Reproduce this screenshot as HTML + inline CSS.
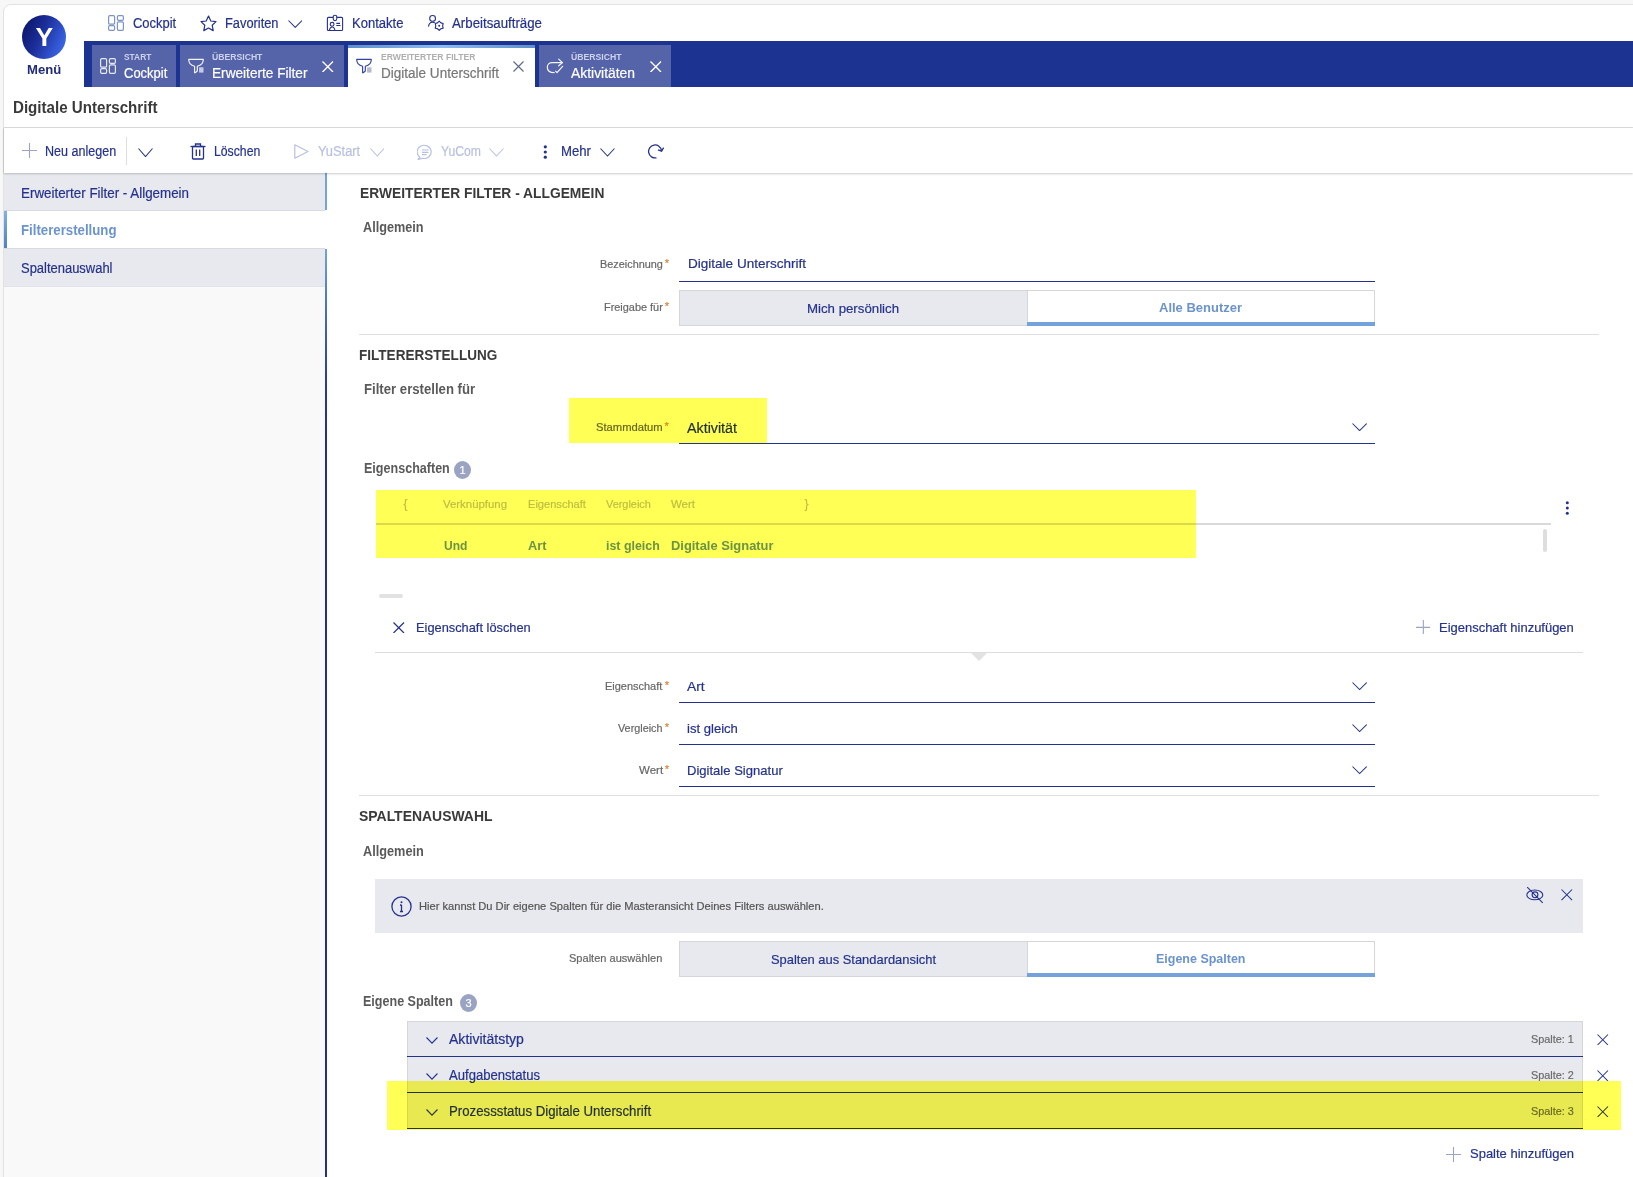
<!DOCTYPE html><html><head><meta charset="utf-8"><style>
*{margin:0;padding:0;box-sizing:content-box;}
html,body{width:1633px;height:1177px;overflow:hidden;background:#f7f7f7;font-family:"Liberation Sans",sans-serif;}
.t{position:absolute;white-space:nowrap;line-height:1;-webkit-text-stroke:0.2px currentColor;}
.t.bo{-webkit-text-stroke:0;}
.b{position:absolute;display:block;}
#card{position:absolute;left:3px;top:4px;width:1640px;height:1200px;background:#fff;border:1px solid #e2e2e2;border-radius:8px;}
#wrap{position:absolute;left:0;top:0;width:1633px;height:1177px;isolation:isolate;}
</style></head><body><div id="wrap"><div id="card"></div>
<div class="b" style="left:22px;top:15px;width:44px;height:44px;border-radius:50%;background:linear-gradient(115deg,#08105e 0%,#1b2d98 42%,#2f52cc 72%,#4474f6 100%);"></div>
<div class="t bo" style="left:35.50px;top:24.47px;font-size:26.5px;color:#fff;font-weight:bold;">Y</div>
<div class="t bo" style="left:27.30px;top:63.39px;font-size:13.6px;color:#1f2b7c;font-weight:bold;transform:scaleX(0.9631);transform-origin:0 0;">Menü</div>
<svg class="b" style="left:108px;top:15px;" width="16" height="16" viewBox="0 0 16 16" fill="none"><g stroke="#7b93c6" stroke-width="1.2"><rect x="0.6" y="0.6" width="6" height="8.6" rx="1.3"/><rect x="0.6" y="10.6" width="6" height="4.8" rx="1.3"/><rect x="9.4" y="0.6" width="6" height="4.8" rx="1.3"/><rect x="9.4" y="6.8" width="6" height="8.6" rx="1.3"/></g></svg>
<div class="t" style="left:132.70px;top:16.05px;font-size:14px;color:#24328c;transform:scaleX(0.9255);transform-origin:0 0;">Cockpit</div>
<svg class="b" style="left:200px;top:14.5px;" width="17" height="17" viewBox="0 0 17 17" fill="none"><path d="M8.5 1L10.8 6L16 6.6L12.2 10.2L13.2 15.6L8.5 13L3.8 15.6L4.8 10.2L1 6.6L6.2 6Z" stroke="#24328c" stroke-width="1.2" stroke-linejoin="round"/></svg>
<div class="t" style="left:224.80px;top:16.05px;font-size:14px;color:#24328c;transform:scaleX(0.9168);transform-origin:0 0;">Favoriten</div>
<svg class="b" style="left:287.7px;top:19.8px;" width="14.5" height="8.4" viewBox="0 0 14.5 8.4" fill="none"><polyline points="0.5,0.5 7.25,7.4 14.0,0.5" stroke="#24328c" stroke-width="1.05"/></svg>
<svg class="b" style="left:322px;top:12px;" width="24" height="22" viewBox="0 0 24 22" fill="none"><g stroke="#24328c" stroke-width="1.1"><rect x="5.4" y="5.4" width="15.2" height="13.1" rx="1"/><rect x="11.2" y="3.2" width="3.6" height="5.4" rx="1.8" fill="#fff"/><circle cx="10.1" cy="12.3" r="1.9"/><path d="M7.4 18.5C7.7 16.2 8.8 15 10.1 15S12.6 16.2 12.9 18.5"/><path d="M14.3 11.4H18M14.3 13.5H18.5"/></g></svg>
<div class="t" style="left:351.80px;top:16.05px;font-size:14px;color:#24328c;transform:scaleX(0.9302);transform-origin:0 0;">Kontakte</div>
<svg class="b" style="left:424px;top:12px;" width="24" height="22" viewBox="0 0 24 22" fill="none"><g stroke="#24328c" stroke-width="1.1" stroke-linejoin="round"><circle cx="8.6" cy="6.4" r="2.9"/><path d="M4.5 14.6C4.8 11.8 6.5 10.3 8.6 10.3C9.5 10.3 10.3 10.5 10.9 10.9"/><path d="M15.20,9.20 L16.90,10.86 L19.18,11.50 L18.60,13.80 L19.18,16.10 L16.90,16.74 L15.20,18.40 L13.50,16.74 L11.22,16.10 L11.80,13.80 L11.22,11.50 L13.50,10.86Z"/></g><circle cx="15.2" cy="13.8" r="1" fill="#24328c"/></svg>
<div class="t" style="left:452.00px;top:16.05px;font-size:14px;color:#24328c;transform:scaleX(0.9479);transform-origin:0 0;">Arbeitsaufträge</div>
<div class="b" style="left:84px;top:41px;width:1549px;height:46px;background:#1c3391;"></div>
<div class="b" style="left:92px;top:45px;width:84px;height:42px;background:#5563a8;"></div>
<svg class="b" style="left:100px;top:58px;" width="16" height="16" viewBox="0 0 16 16" fill="none"><g stroke="#e6e9f4" stroke-width="1.2"><rect x="0.6" y="0.6" width="6" height="8.6" rx="1.3"/><rect x="0.6" y="10.6" width="6" height="4.8" rx="1.3"/><rect x="9.4" y="0.6" width="6" height="4.8" rx="1.3"/><rect x="9.4" y="6.8" width="6" height="8.6" rx="1.3"/></g></svg>
<div class="t bo" style="left:124.30px;top:53.18px;font-size:9px;color:#cdd2ec;font-weight:bold;transform:scaleX(0.9308);transform-origin:0 0;">START</div>
<div class="t" style="left:124.30px;top:66.35px;font-size:14px;color:#fff;transform:scaleX(0.9277);transform-origin:0 0;">Cockpit</div>
<div class="b" style="left:180px;top:45px;width:164px;height:42px;background:#5563a8;"></div>
<svg class="b" style="left:184px;top:54px;" width="24" height="24" viewBox="0 0 24 24" fill="none"><path d="M4.7 5.3H19.3C19.3 9.5 16.5 11.6 13.3 12.2V17L11.2 18.7H10.6V12.2C7.5 11.6 4.7 9.5 4.7 5.3Z" stroke="#f4f5fb" stroke-width="1.15" stroke-linejoin="round"/><rect x="15.1" y="13.3" width="4.4" height="5.3" fill="#c5c9e6"/></svg>
<div class="t bo" style="left:212.30px;top:53.18px;font-size:9px;color:#cdd2ec;font-weight:bold;transform:scaleX(0.9599);transform-origin:0 0;">ÜBERSICHT</div>
<div class="t" style="left:212.30px;top:66.35px;font-size:14px;color:#fff;transform:scaleX(0.9742);transform-origin:0 0;">Erweiterte Filter</div>
<svg class="b" style="left:322px;top:60.5px;" width="11.5" height="11.5" viewBox="0 0 11.5 11.5" fill="none"><path d="M0.5 0.5L11.0 11.0M11.0 0.5L0.5 11.0" stroke="#fff" stroke-width="1.4"/></svg>
<div class="b" style="left:348px;top:45px;width:187px;height:43px;background:#fff;"></div>
<div class="b" style="left:348px;top:45px;width:187px;height:3px;background:linear-gradient(90deg,#5f8fcc,#8cbcec 50%,#5f8fcc);"></div>
<svg class="b" style="left:352px;top:54px;" width="24" height="24" viewBox="0 0 24 24" fill="none"><path d="M4.7 5.3H19.3C19.3 9.5 16.5 11.6 13.3 12.2V17L11.2 18.7H10.6V12.2C7.5 11.6 4.7 9.5 4.7 5.3Z" stroke="#3443a0" stroke-width="1.15" stroke-linejoin="round"/><rect x="15.1" y="13.3" width="4.4" height="5.3" fill="#b4b9d2"/></svg>
<div class="t bo" style="left:380.60px;top:53.18px;font-size:9px;color:#aeaeae;font-weight:bold;transform:scaleX(0.9568);transform-origin:0 0;">ERWEITERTER FILTER</div>
<div class="t" style="left:380.60px;top:66.35px;font-size:14px;color:#777;transform:scaleX(0.9660);transform-origin:0 0;">Digitale Unterschrift</div>
<svg class="b" style="left:513.3px;top:60.5px;" width="11" height="11" viewBox="0 0 11 11" fill="none"><path d="M0.5 0.5L10.5 10.5M10.5 0.5L0.5 10.5" stroke="#606a8c" stroke-width="1.2"/></svg>
<div class="b" style="left:539px;top:45px;width:132px;height:42px;background:#5563a8;"></div>
<svg class="b" style="left:543px;top:54px;" width="24" height="24" viewBox="0 0 24 24" fill="none"><g stroke="#f4f5fb" stroke-width="1.2" stroke-linecap="round" stroke-linejoin="round"><path d="M19.4 8.6H9.2C6.3 8.6 4.3 10.6 4.3 13.2C4.3 16.4 6.8 18.6 11.2 18.6"/><path d="M15.7 5.1L19.4 8.6L15.7 11.8"/><path d="M12.6 17.2L14 18.6L19.6 12.3"/></g></svg>
<div class="t bo" style="left:571.00px;top:53.18px;font-size:9px;color:#cdd2ec;font-weight:bold;transform:scaleX(0.9637);transform-origin:0 0;">ÜBERSICHT</div>
<div class="t" style="left:571.00px;top:66.35px;font-size:14px;color:#fff;transform:scaleX(0.9910);transform-origin:0 0;">Aktivitäten</div>
<svg class="b" style="left:650px;top:60.5px;" width="11.5" height="11.5" viewBox="0 0 11.5 11.5" fill="none"><path d="M0.5 0.5L11.0 11.0M11.0 0.5L0.5 11.0" stroke="#fff" stroke-width="1.4"/></svg>
<div class="t bo" style="left:12.50px;top:99.86px;font-size:16px;color:#3a3a3a;font-weight:bold;transform:scaleX(0.9450);transform-origin:0 0;">Digitale Unterschrift</div>
<div class="b" style="left:4px;top:127px;width:1629px;height:1px;background:#dcdcdc;"></div>
<div class="b" style="left:4px;top:173px;width:322px;height:1004px;background:#f9f9f9;"></div>
<div class="b" style="left:4px;top:173px;width:321px;height:37px;background:#e8e9ee;"></div>
<div class="b" style="left:4px;top:210px;width:321px;height:1px;background:#d9dae0;"></div>
<div class="b" style="left:4px;top:211px;width:322px;height:37px;background:#fff;"></div>
<div class="b" style="left:4px;top:211px;width:3px;height:37px;background:linear-gradient(180deg,#7fb0e6,#4f80c0);"></div>
<div class="b" style="left:4px;top:248px;width:321px;height:1px;background:#d9dae0;"></div>
<div class="b" style="left:4px;top:249px;width:321px;height:37px;background:#e8e9ee;"></div>
<div class="b" style="left:4px;top:286px;width:321px;height:1px;background:#e2e3e8;"></div>
<div class="t" style="left:20.60px;top:185.55px;font-size:14px;color:#24328c;transform:scaleX(0.9555);transform-origin:0 0;">Erweiterter Filter - Allgemein</div>
<div class="t bo" style="left:20.60px;top:222.85px;font-size:14px;color:#6b93cc;font-weight:bold;transform:scaleX(0.9443);transform-origin:0 0;">Filtererstellung</div>
<div class="t" style="left:20.60px;top:260.85px;font-size:14px;color:#24328c;transform:scaleX(0.9256);transform-origin:0 0;">Spaltenauswahl</div>
<div class="b" style="left:325px;top:173px;width:2px;height:37px;background:#72a2dc;"></div>
<div class="b" style="left:325px;top:249px;width:2px;height:928px;background:linear-gradient(180deg,#72a2dc 0px,#4566bb 70px,#2a3d9a 130px,#1f2f8f 190px,#1f2f8f 100%);"></div>
<div class="b" style="left:4px;top:128px;width:1629px;height:45px;background:#fff;box-shadow:0 1px 2px rgba(0,0,0,0.2),-1px 0 1px rgba(0,0,0,0.06);"></div>
<svg class="b" style="left:22px;top:143px;" width="15" height="15" viewBox="0 0 15 15" fill="none"><path d="M7.5 0V15M0 7.5H15" stroke="#9ca4c6" stroke-width="1.1"/></svg>
<div class="t" style="left:45.40px;top:144.45px;font-size:14px;color:#24328c;transform:scaleX(0.8968);transform-origin:0 0;">Neu anlegen</div>
<div class="b" style="left:125.5px;top:137px;width:1px;height:28px;background:#dedede;"></div>
<svg class="b" style="left:138px;top:147.7px;" width="15" height="9.6" viewBox="0 0 15 9.6" fill="none"><polyline points="0.5,0.5 7.5,8.6 14.5,0.5" stroke="#24328c" stroke-width="1.05"/></svg>
<svg class="b" style="left:189.5px;top:142.5px;" width="16" height="17" viewBox="0 0 16 17" fill="none"><g stroke="#24328c" stroke-width="1.3"><path d="M0.5 3.5H15.5"/><path d="M5.5 3.5V1H10.5V3.5"/><rect x="2.5" y="3.5" width="11" height="12.5" rx="0.8"/><path d="M6.3 6.5V13M9.7 6.5V13"/></g></svg>
<div class="t" style="left:214.40px;top:144.45px;font-size:14px;color:#24328c;transform:scaleX(0.8747);transform-origin:0 0;">Löschen</div>
<svg class="b" style="left:294px;top:144px;" width="15" height="15" viewBox="0 0 15 15" fill="none"><path d="M0.8 0.8L14 7.5L0.8 14.2Z" stroke="#b8c0e0" stroke-width="1.2" stroke-linejoin="round"/></svg>
<div class="t" style="left:317.50px;top:144.45px;font-size:14px;color:#b8c0e0;transform:scaleX(0.9190);transform-origin:0 0;">YuStart</div>
<svg class="b" style="left:369.5px;top:148px;" width="14.5" height="9" viewBox="0 0 14.5 9" fill="none"><polyline points="0.5,0.5 7.25,8 14.0,0.5" stroke="#b8c0e0" stroke-width="1.05"/></svg>
<svg class="b" style="left:416.5px;top:143.5px;" width="16" height="16" viewBox="0 0 16 16" fill="none"><g stroke="#b8c0e0" stroke-width="1.2"><path d="M3 13.2A7 6.6 0 1 1 5.5 14.3L1 15.3Z" stroke-linejoin="round"/><path d="M5 6H11.5M5 8.3H11.5M5 10.6H9.5"/></g></svg>
<div class="t" style="left:440.50px;top:144.45px;font-size:14px;color:#b8c0e0;transform:scaleX(0.8713);transform-origin:0 0;">YuCom</div>
<svg class="b" style="left:489px;top:148px;" width="15" height="9" viewBox="0 0 15 9" fill="none"><polyline points="0.5,0.5 7.5,8 14.5,0.5" stroke="#b8c0e0" stroke-width="1.05"/></svg>
<svg class="b" style="left:542.5px;top:144.5px;" width="5" height="14" viewBox="0 0 5 14" fill="none"><g fill="#24328c"><circle cx="2.3" cy="1.8" r="1.6"/><circle cx="2.3" cy="7" r="1.6"/><circle cx="2.3" cy="12.2" r="1.6"/></g></svg>
<div class="t" style="left:561.40px;top:144.45px;font-size:14px;color:#24328c;transform:scaleX(0.9407);transform-origin:0 0;">Mehr</div>
<svg class="b" style="left:600px;top:148px;" width="15" height="9" viewBox="0 0 15 9" fill="none"><polyline points="0.5,0.5 7.5,8 14.5,0.5" stroke="#24328c" stroke-width="1.05"/></svg>
<svg class="b" style="left:647px;top:144px;" width="18" height="15" viewBox="0 0 18 15" fill="none"><g stroke="#24328c" stroke-width="1.3"><path d="M14.5 6.5A6.5 6.5 0 1 0 9.5 13.8"/><path d="M11 5.8L14.6 7.2L16.6 3.6"/></g></svg>
<div class="t bo" style="left:359.50px;top:185.15px;font-size:15.3px;color:#3a3a3a;font-weight:bold;transform:scaleX(0.9023);transform-origin:0 0;">ERWEITERTER FILTER - ALLGEMEIN</div>
<div class="t bo" style="left:363.20px;top:221.22px;font-size:13.8px;color:#5a5a5a;font-weight:bold;transform:scaleX(0.9189);transform-origin:0 0;">Allgemein</div>
<div class="t" style="left:599.80px;top:259.33px;font-size:11.3px;color:#666;transform:scaleX(0.9627);transform-origin:0 0;">Bezeichnung</div>
<div class="t" style="left:664.70px;top:258.39px;font-size:11px;color:#e0823c;">*</div>
<div class="t" style="left:687.50px;top:257.47px;font-size:13.5px;color:#24328c;transform:scaleX(1.0027);transform-origin:0 0;">Digitale Unterschrift</div>
<div class="b" style="left:679px;top:280.7px;width:696px;height:1.5px;background:#24328f;"></div>
<div class="t" style="left:603.90px;top:301.53px;font-size:11.3px;color:#666;transform:scaleX(0.9650);transform-origin:0 0;">Freigabe für</div>
<div class="t" style="left:664.70px;top:300.59px;font-size:11px;color:#e0823c;">*</div>
<div class="b" style="left:679px;top:290px;width:348px;height:36px;background:#e8e9ee;border:1px solid #d5d6da;border-right:none;box-sizing:border-box;"></div>
<div class="b" style="left:1027px;top:290px;width:348px;height:36px;background:#fff;border:1px solid #d5d6da;box-sizing:border-box;"></div>
<div class="b" style="left:1027px;top:322px;width:348px;height:3.5px;background:#74a3dc;"></div>
<div class="t" style="left:807.00px;top:301.57px;font-size:13.5px;color:#24328c;transform:scaleX(0.9810);transform-origin:0 0;">Mich persönlich</div>
<div class="t bo" style="left:1159.00px;top:300.87px;font-size:13.5px;color:#6b93cc;font-weight:bold;transform:scaleX(0.9622);transform-origin:0 0;">Alle Benutzer</div>
<div class="b" style="left:359px;top:334px;width:1240px;height:1px;background:#e0e0e0;"></div>
<div class="t bo" style="left:359.30px;top:347.15px;font-size:15.3px;color:#3a3a3a;font-weight:bold;transform:scaleX(0.8859);transform-origin:0 0;">FILTERERSTELLUNG</div>
<div class="t bo" style="left:363.50px;top:382.82px;font-size:13.8px;color:#5a5a5a;font-weight:bold;transform:scaleX(0.9539);transform-origin:0 0;">Filter erstellen für</div>
<div class="t" style="left:595.70px;top:421.83px;font-size:11.3px;color:#666;transform:scaleX(0.9927);transform-origin:0 0;">Stammdatum</div>
<div class="t" style="left:664.40px;top:420.89px;font-size:11px;color:#e0823c;">*</div>
<div class="t" style="left:687.00px;top:420.85px;font-size:14px;color:#24328c;transform:scaleX(1.0201);transform-origin:0 0;">Aktivität</div>
<div class="b" style="left:679px;top:442.6px;width:696px;height:1.5px;background:#24328f;"></div>
<svg class="b" style="left:1351.5px;top:422.8px;" width="15.2" height="8.6" viewBox="0 0 15.2 8.6" fill="none"><polyline points="0.5,0.5 7.6,7.6 14.7,0.5" stroke="#24328c" stroke-width="1.05"/></svg>
<div class="t bo" style="left:363.50px;top:461.82px;font-size:13.8px;color:#5a5a5a;font-weight:bold;transform:scaleX(0.9096);transform-origin:0 0;">Eigenschaften</div>
<div class="b" style="left:454px;top:461px;width:17px;height:18px;border-radius:50%;background:#9aa4c2;"></div>
<div class="t" style="left:459.44px;top:464.89px;font-size:11px;color:#fff;">1</div>
<div class="t" style="left:403.60px;top:498.24px;font-size:12px;color:#bdbdbd;">{</div>
<div class="t" style="left:443.00px;top:498.67px;font-size:11.5px;color:#bdbdbd;transform:scaleX(0.9910);transform-origin:0 0;">Verknüpfung</div>
<div class="t" style="left:528.00px;top:498.67px;font-size:11.5px;color:#bdbdbd;transform:scaleX(0.9634);transform-origin:0 0;">Eigenschaft</div>
<div class="t" style="left:606.20px;top:498.67px;font-size:11.5px;color:#bdbdbd;transform:scaleX(0.9469);transform-origin:0 0;">Vergleich</div>
<div class="t" style="left:671.20px;top:498.67px;font-size:11.5px;color:#bdbdbd;transform:scaleX(0.9971);transform-origin:0 0;">Wert</div>
<div class="t" style="left:804.60px;top:498.24px;font-size:12px;color:#bdbdbd;">}</div>
<div class="b" style="left:376px;top:523px;width:1175px;height:2px;background:#d9d9d9;"></div>
<div class="t bo" style="left:443.60px;top:538.80px;font-size:13px;color:#6b93cc;font-weight:bold;transform:scaleX(0.9259);transform-origin:0 0;">Und</div>
<div class="t bo" style="left:528.00px;top:538.80px;font-size:13px;color:#6b93cc;font-weight:bold;transform:scaleX(0.9855);transform-origin:0 0;">Art</div>
<div class="t bo" style="left:606.40px;top:538.80px;font-size:13px;color:#6b93cc;font-weight:bold;transform:scaleX(0.9549);transform-origin:0 0;">ist gleich</div>
<div class="t bo" style="left:671.20px;top:538.80px;font-size:13px;color:#6b93cc;font-weight:bold;transform:scaleX(0.9924);transform-origin:0 0;">Digitale Signatur</div>
<svg class="b" style="left:1564.5px;top:501px;" width="5" height="14" viewBox="0 0 5 14" fill="none"><g fill="#24328c"><circle cx="2.3" cy="1.8" r="1.5"/><circle cx="2.3" cy="7" r="1.5"/><circle cx="2.3" cy="12.2" r="1.5"/></g></svg>
<div class="b" style="left:1543px;top:529px;width:4px;height:23px;background:#dedede;border-radius:2px;"></div>
<div class="b" style="left:379px;top:594px;width:24px;height:4px;background:#e2e2e2;border-radius:2px;"></div>
<svg class="b" style="left:393.2px;top:621.5px;" width="11.5" height="11.5" viewBox="0 0 11.5 11.5" fill="none"><path d="M0.5 0.5L11.0 11.0M11.0 0.5L0.5 11.0" stroke="#24328c" stroke-width="1.2"/></svg>
<div class="t" style="left:415.60px;top:620.57px;font-size:13.5px;color:#24328c;transform:scaleX(0.9493);transform-origin:0 0;">Eigenschaft löschen</div>
<svg class="b" style="left:1415.6px;top:619.5px;" width="14.7" height="14.7" viewBox="0 0 14.7 14.7" fill="none"><path d="M7.35 0V14.7M0 7.35H14.7" stroke="#9ca4c6" stroke-width="1.1"/></svg>
<div class="t" style="left:1439.40px;top:620.57px;font-size:13.5px;color:#24328c;transform:scaleX(0.9604);transform-origin:0 0;">Eigenschaft hinzufügen</div>
<div class="b" style="left:375px;top:652px;width:1208px;height:1px;background:#dedede;"></div>
<svg class="b" style="left:971px;top:652.5px;" width="16" height="8" viewBox="0 0 16 8" fill="none"><path d="M0 0H16L8 8Z" fill="#e2e2e2"/></svg>
<div class="t" style="left:605.40px;top:680.53px;font-size:11.3px;color:#666;transform:scaleX(0.9703);transform-origin:0 0;">Eigenschaft</div>
<div class="t" style="left:664.70px;top:679.59px;font-size:11px;color:#e0823c;">*</div>
<div class="t" style="left:687.40px;top:679.64px;font-size:13.3px;color:#24328c;transform:scaleX(1.0413);transform-origin:0 0;">Art</div>
<div class="b" style="left:679px;top:701.7px;width:696px;height:1.5px;background:#24328f;"></div>
<svg class="b" style="left:1351.5px;top:682.3px;" width="15.2" height="8.6" viewBox="0 0 15.2 8.6" fill="none"><polyline points="0.5,0.5 7.6,7.6 14.7,0.5" stroke="#24328c" stroke-width="1.05"/></svg>
<div class="t" style="left:618.20px;top:722.53px;font-size:11.3px;color:#666;transform:scaleX(0.9572);transform-origin:0 0;">Vergleich</div>
<div class="t" style="left:664.70px;top:721.59px;font-size:11px;color:#e0823c;">*</div>
<div class="t" style="left:687.40px;top:721.64px;font-size:13.3px;color:#24328c;transform:scaleX(0.9836);transform-origin:0 0;">ist gleich</div>
<div class="b" style="left:679px;top:743.7px;width:696px;height:1.5px;background:#24328f;"></div>
<svg class="b" style="left:1351.5px;top:724.3px;" width="15.2" height="8.6" viewBox="0 0 15.2 8.6" fill="none"><polyline points="0.5,0.5 7.6,7.6 14.7,0.5" stroke="#24328c" stroke-width="1.05"/></svg>
<div class="t" style="left:638.60px;top:764.53px;font-size:11.3px;color:#666;transform:scaleX(1.0190);transform-origin:0 0;">Wert</div>
<div class="t" style="left:664.70px;top:763.59px;font-size:11px;color:#e0823c;">*</div>
<div class="t" style="left:687.40px;top:763.64px;font-size:13.3px;color:#24328c;transform:scaleX(0.9817);transform-origin:0 0;">Digitale Signatur</div>
<div class="b" style="left:679px;top:785.7px;width:696px;height:1.5px;background:#24328f;"></div>
<svg class="b" style="left:1351.5px;top:766.3px;" width="15.2" height="8.6" viewBox="0 0 15.2 8.6" fill="none"><polyline points="0.5,0.5 7.6,7.6 14.7,0.5" stroke="#24328c" stroke-width="1.05"/></svg>
<div class="b" style="left:359px;top:795px;width:1240px;height:1px;background:#e0e0e0;"></div>
<div class="t bo" style="left:359.00px;top:808.05px;font-size:15.3px;color:#3a3a3a;font-weight:bold;transform:scaleX(0.9114);transform-origin:0 0;">SPALTENAUSWAHL</div>
<div class="t bo" style="left:363.00px;top:845.12px;font-size:13.8px;color:#5a5a5a;font-weight:bold;transform:scaleX(0.9219);transform-origin:0 0;">Allgemein</div>
<div class="b" style="left:375px;top:879px;width:1208px;height:53.5px;background:#e8e9ee;"></div>
<svg class="b" style="left:390.5px;top:896px;" width="21" height="21" viewBox="0 0 21 21" fill="none"><circle cx="10.5" cy="10.5" r="9.6" stroke="#24328c" stroke-width="1.3"/><path d="M10.5 9V15.5M9 9H10.5M9 15.5H12" stroke="#24328c" stroke-width="1.3"/><circle cx="10.5" cy="6.3" r="1" fill="#24328c"/></svg>
<div class="t" style="left:419.00px;top:901.02px;font-size:11.2px;color:#555;transform:scaleX(0.9938);transform-origin:0 0;">Hier kannst Du Dir eigene Spalten für die Masteransicht Deines Filters auswählen.</div>
<svg class="b" style="left:1520px;top:880px;" width="28" height="28" viewBox="0 0 28 28" fill="none"><g stroke="#24328c" stroke-width="1.1"><ellipse cx="14.8" cy="14.9" rx="8" ry="4.9"/><circle cx="15" cy="14.8" r="2.9"/><path d="M7.2 7.2L22.7 22.8"/></g></svg>
<svg class="b" style="left:1561px;top:889.2px;" width="11.6" height="11.6" viewBox="0 0 11.6 11.6" fill="none"><path d="M0.5 0.5L11.1 11.1M11.1 0.5L0.5 11.1" stroke="#24328c" stroke-width="1.05"/></svg>
<div class="t" style="left:569.20px;top:953.13px;font-size:11.3px;color:#666;transform:scaleX(0.9780);transform-origin:0 0;">Spalten auswählen</div>
<div class="b" style="left:679px;top:941px;width:348px;height:36px;background:#e8e9ee;border:1px solid #d5d6da;border-right:none;box-sizing:border-box;"></div>
<div class="b" style="left:1027px;top:941px;width:348px;height:36px;background:#fff;border:1px solid #d5d6da;box-sizing:border-box;"></div>
<div class="b" style="left:1027px;top:973px;width:348px;height:3.5px;background:#74a3dc;"></div>
<div class="t" style="left:770.50px;top:953.07px;font-size:13.5px;color:#24328c;transform:scaleX(0.9558);transform-origin:0 0;">Spalten aus Standardansicht</div>
<div class="t bo" style="left:1155.75px;top:952.07px;font-size:13.5px;color:#6b93cc;font-weight:bold;transform:scaleX(0.9248);transform-origin:0 0;">Eigene Spalten</div>
<div class="t bo" style="left:363.30px;top:994.82px;font-size:13.8px;color:#5a5a5a;font-weight:bold;transform:scaleX(0.9087);transform-origin:0 0;">Eigene Spalten</div>
<div class="b" style="left:460px;top:994px;width:17px;height:18px;border-radius:50%;background:#9aa4c2;"></div>
<div class="t" style="left:465.44px;top:997.89px;font-size:11px;color:#fff;">3</div>
<div class="b" style="left:407px;top:1021px;width:1176px;height:108px;background:#e8e9ee;border:1px solid #d6d6d6;border-bottom:none;box-sizing:border-box;"></div>
<div class="b" style="left:407px;top:1055.7px;width:1176px;height:1.6px;background:#24328f;"></div>
<svg class="b" style="left:426.3px;top:1037px;" width="12" height="7.2" viewBox="0 0 12 7.2" fill="none"><polyline points="0.5,0.5 6.0,6.2 11.5,0.5" stroke="#24328c" stroke-width="1.1"/></svg>
<div class="t" style="left:449.30px;top:1032.15px;font-size:14px;color:#24328c;transform:scaleX(1.0028);transform-origin:0 0;">Aktivitätstyp</div>
<div class="t" style="left:1531.40px;top:1033.67px;font-size:11.5px;color:#6a6a6a;transform:scaleX(0.9451);transform-origin:0 0;">Spalte: 1</div>
<svg class="b" style="left:1597.3px;top:1033.6px;" width="11.5" height="11.5" viewBox="0 0 11.5 11.5" fill="none"><path d="M0.5 0.5L11.0 11.0M11.0 0.5L0.5 11.0" stroke="#24328c" stroke-width="1.05"/></svg>
<div class="b" style="left:407px;top:1091.7px;width:1176px;height:1.6px;background:#24328f;"></div>
<svg class="b" style="left:426.3px;top:1073px;" width="12" height="7.2" viewBox="0 0 12 7.2" fill="none"><polyline points="0.5,0.5 6.0,6.2 11.5,0.5" stroke="#24328c" stroke-width="1.1"/></svg>
<div class="t" style="left:449.30px;top:1068.15px;font-size:14px;color:#24328c;transform:scaleX(0.9353);transform-origin:0 0;">Aufgabenstatus</div>
<div class="t" style="left:1531.40px;top:1069.67px;font-size:11.5px;color:#6a6a6a;transform:scaleX(0.9451);transform-origin:0 0;">Spalte: 2</div>
<svg class="b" style="left:1597.3px;top:1069.6px;" width="11.5" height="11.5" viewBox="0 0 11.5 11.5" fill="none"><path d="M0.5 0.5L11.0 11.0M11.0 0.5L0.5 11.0" stroke="#24328c" stroke-width="1.05"/></svg>
<div class="b" style="left:407px;top:1127.7px;width:1176px;height:1.6px;background:#24328f;"></div>
<svg class="b" style="left:426.3px;top:1109px;" width="12" height="7.2" viewBox="0 0 12 7.2" fill="none"><polyline points="0.5,0.5 6.0,6.2 11.5,0.5" stroke="#24328c" stroke-width="1.1"/></svg>
<div class="t" style="left:449.30px;top:1104.15px;font-size:14px;color:#24328c;transform:scaleX(0.9446);transform-origin:0 0;">Prozessstatus Digitale Unterschrift</div>
<div class="t" style="left:1531.40px;top:1105.67px;font-size:11.5px;color:#6a6a6a;transform:scaleX(0.9451);transform-origin:0 0;">Spalte: 3</div>
<svg class="b" style="left:1597.3px;top:1105.6px;" width="11.5" height="11.5" viewBox="0 0 11.5 11.5" fill="none"><path d="M0.5 0.5L11.0 11.0M11.0 0.5L0.5 11.0" stroke="#24328c" stroke-width="1.05"/></svg>
<svg class="b" style="left:1446.4px;top:1146.5px;" width="15" height="15" viewBox="0 0 15 15" fill="none"><path d="M7.5 0V15M0 7.5H15" stroke="#9ca4c6" stroke-width="1.1"/></svg>
<div class="t" style="left:1470.30px;top:1147.17px;font-size:13.5px;color:#24328c;transform:scaleX(0.9622);transform-origin:0 0;">Spalte hinzufügen</div>
<div class="b" style="left:569px;top:398px;width:198px;height:44.6px;background:#ffff55;mix-blend-mode:multiply;"></div>
<div class="b" style="left:376px;top:490px;width:820px;height:67.5px;background:#ffff55;mix-blend-mode:multiply;"></div>
<div class="b" style="left:387px;top:1081px;width:1234px;height:49px;background:#ffff55;mix-blend-mode:multiply;"></div>
</div></body></html>
